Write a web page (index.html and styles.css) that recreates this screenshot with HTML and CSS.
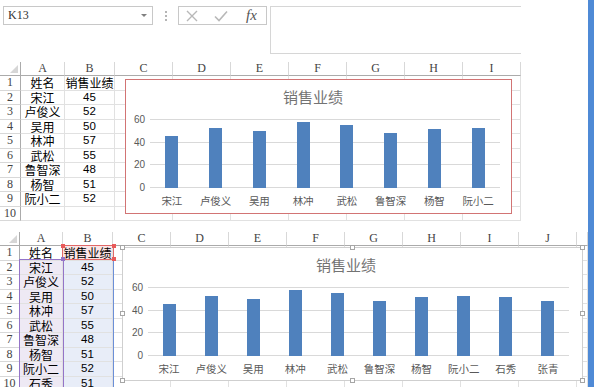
FILE: index.html
```html
<!DOCTYPE html>
<html lang="zh-CN">
<head>
    <meta charset="UTF-8">
    <title>销售业绩</title>
    <link rel="stylesheet" href="styles.css">
</head>
<body>
    <div class="window">
        <div class="main">
            <div class="formula-bar">
                <div class="name-box">
                    <span>K13</span>
                    <span class="drop"></span>
                </div>
                <div class="grip"><i></i><i></i><i></i></div>
                <div class="fx-box">
                    <svg width="12" height="12" viewBox="0 0 12 12"><path d="M1 1L11 11M11 1L1 11" stroke="#b8b8b8" stroke-width="1.4" fill="none"/></svg>
                    <svg width="14" height="12" viewBox="0 0 14 12"><path d="M1 6.5L5 10.5L13 1.5" stroke="#b8b8b8" stroke-width="1.6" fill="none"/></svg>
                    <span class="fx">fx</span>
                </div>
                <div class="formula-input"></div>
            </div>

            <div class="sheet sheet-top">
                <div class="grid" id="gridTop"></div>
                <div class="chart chart-top" id="chartTop">
                    <div class="chart-title">销售业绩</div>
                    <div class="chart-body">
                        <div class="axis"><span>60</span><span>40</span><span>20</span><span>0</span></div>
                        <div class="plot">
                            <div class="gridlines"><i></i><i></i><i></i><i></i></div>
                            <div class="bars"></div>
                        </div>
                        <div class="cats"></div>
                    </div>
                </div>
            </div>

            <div class="sheet sheet-bottom">
                <div class="grid" id="gridBottom"></div>
                <div class="range range-val"></div>
                <div class="range range-cat"></div>
                <div class="range range-name"></div>
                <div class="knob knob-red k-tl"></div>
                <div class="knob knob-red k-tr"></div>
                <div class="knob knob-red k-br"></div>
                <div class="knob knob-purple k-cat"></div>
                <div class="chart chart-bottom" id="chartBottom">
                    <div class="chart-title">销售业绩</div>
                    <div class="chart-body">
                        <div class="axis"><span>60</span><span>40</span><span>20</span><span>0</span></div>
                        <div class="plot">
                            <div class="gridlines"><i></i><i></i><i></i><i></i></div>
                            <div class="bars"></div>
                        </div>
                        <div class="cats"></div>
                    </div>
                    <div class="handle h-tl"></div>
                    <div class="handle h-tm"></div>
                    <div class="handle h-tr"></div>
                    <div class="handle h-ml"></div>
                    <div class="handle h-mr"></div>
                    <div class="handle h-bl"></div>
                    <div class="handle h-bm"></div>
                    <div class="handle h-br"></div>
                </div>
            </div>
        </div>
        <div class="edge"></div>
    </div>

    <script>
        // Sales data
        const people = [
            ['宋江', 45], ['卢俊义', 52], ['吴用', 50], ['林冲', 57], ['武松', 55],
            ['鲁智深', 48], ['杨智', 51], ['阮小二', 52], ['石秀', 51], ['张青', 48]
        ];

        function buildSheet(id, cols, rows, marked) {
            const grid = document.getElementById(id);
            const add = (cls, text) => {
                const cell = document.createElement('div');
                cell.className = 'cell ' + cls;
                cell.textContent = text === undefined ? '' : text;
                grid.appendChild(cell);
            };

            add('head corner');
            cols.forEach(letter => add('head col-head', letter));

            for (let r = 1; r <= 10; r++) {
                add('head row-head', r);
                const row = rows[r - 2];
                cols.forEach((letter, i) => {
                    let text = '';
                    let cls = 'txt';
                    if (i === 0) {
                        text = r === 1 ? '姓名' : (row ? row[0] : '');
                        if (marked && r > 1) cls += ' fill-cat';
                    }
                    if (i === 1) {
                        text = r === 1 ? '销售业绩' : (row ? row[1] : '');
                        if (r > 1) cls = 'num';
                        if (marked) cls += r === 1 ? ' fill-name' : ' fill-val';
                    }
                    add(cls, text);
                });
            }
        }

        function buildChart(id, items) {
            const chart = document.getElementById(id);
            const bars = chart.querySelector('.bars');
            const cats = chart.querySelector('.cats');
            items.forEach(([name, value]) => {
                const slot = document.createElement('div');
                slot.className = 'slot';
                const bar = document.createElement('div');
                bar.className = 'bar';
                bar.style.height = (value * 69 / 60) + 'px';
                slot.appendChild(bar);
                bars.appendChild(slot);

                const label = document.createElement('div');
                label.className = 'cat';
                label.textContent = name;
                cats.appendChild(label);
            });
        }

        buildSheet('gridTop', ['A', 'B', 'C', 'D', 'E', 'F', 'G', 'H', 'I'], people.slice(0, 8), false);
        buildSheet('gridBottom', ['A', 'B', 'C', 'D', 'E', 'F', 'G', 'H', 'I', 'J', ''], people, true);
        buildChart('chartTop', people.slice(0, 8));
        buildChart('chartBottom', people);
    </script>
</body>
</html>
```

FILE: styles.css
```css
* {
    margin: 0;
    padding: 0;
    box-sizing: border-box;
}

body {
    width: 600px;
    height: 387px;
    overflow: hidden;
    background: #fff;
    font-family: 'Liberation Sans', 'Noto Sans CJK SC', sans-serif;
    color: #000;
}

.window {
    display: flex;
    height: 387px;
}

.main {
    width: 588px;
    height: 387px;
    overflow: hidden;
}

.edge {
    width: 6px;
    background: #4f8ad6;
}

/* formula bar */
.formula-bar {
    display: flex;
    align-items: flex-start;
    height: 54px;
    padding: 6px 0 0 3px;
}

.name-box {
    width: 150px;
    height: 19px;
    border: 1px solid #c8c8c8;
    display: flex;
    align-items: center;
    justify-content: space-between;
    padding: 0 5px 0 4px;
    font-family: 'Liberation Serif', serif;
    font-size: 12px;
    color: #333;
}

.drop {
    border-left: 3px solid transparent;
    border-right: 3px solid transparent;
    border-top: 3px solid #808080;
}

.grip {
    width: 25px;
    height: 19px;
    display: flex;
    flex-direction: column;
    align-items: center;
    justify-content: center;
    gap: 2px;
}

.grip i {
    width: 2px;
    height: 2px;
    background: #b5b5b5;
}

.fx-box {
    width: 89px;
    height: 19px;
    border: 1px solid #c8c8c8;
    display: grid;
    grid-template-columns: 25px 33px 29px;
    align-items: center;
    justify-items: center;
}

.fx {
    font-family: 'Liberation Serif', serif;
    font-style: italic;
    font-size: 15px;
    line-height: 17px;
    color: #555;
}

.formula-input {
    margin-left: 3px;
    width: 251px;
    height: 48px;
    border: 1px solid #d6d6d6;
    border-right: none;
}

/* sheets */
.sheet {
    position: relative;
}

.sheet-top {
    margin-top: 8px;
}

.sheet-bottom {
    margin-top: 11px;
}

.grid {
    display: grid;
    grid-template-rows: 14px repeat(10, 14.5px);
}

.sheet-top .grid {
    width: 521px;
    grid-template-columns: 21px 44px 50px repeat(7, 58px);
}

.sheet-bottom .grid {
    grid-template-columns: 20px 43px 50px repeat(8, 58px) 11px;
}

.cell {
    border-right: 1px solid #e1e1e1;
    border-bottom: 1px solid #e1e1e1;
    font-size: 12px;
    line-height: 13.5px;
    text-align: center;
    white-space: nowrap;
}

.txt {
    font-family: 'Noto Sans CJK SC', sans-serif;
}

.num {
    font-size: 11.5px;
}

.head {
    font-family: 'Liberation Serif', serif;
    font-size: 12px;
    line-height: 13px;
    color: #444;
    border-color: #d8d8d8;
    overflow: hidden;
}

.col-head {
    border-bottom-color: #ababab;
}

.row-head {
    border-right-color: #ababab;
}

.corner {
    display: flex;
    align-items: flex-end;
    justify-content: flex-end;
    padding: 0 2px 2px 0;
    border-right-color: #ababab;
    border-bottom-color: #ababab;
}

.corner::after {
    content: '';
    border-left: 8px solid transparent;
    border-bottom: 8px solid #d6d6d6;
}

.fill-cat {
    background: #eee9f4;
}

.fill-val {
    background: #e8edf8;
}

.fill-name {
    background: #fbe5e5;
}

/* source range outlines */
.range {
    position: absolute;
}

.range-name {
    left: 62px;
    top: 13px;
    width: 52px;
    height: 15px;
    border: 1px solid #e06868;
}

.range-cat {
    left: 19px;
    top: 27px;
    width: 45px;
    height: 140px;
    border: 1px solid #9474c8;
}

.range-val {
    left: 63px;
    top: 27px;
    width: 51px;
    height: 140px;
    border: 1px solid #6b8fd8;
}

.knob {
    position: absolute;
    width: 4px;
    height: 4px;
}

.knob-red {
    background: #e85a5a;
}

.knob-purple {
    background: #9474c8;
}

.k-tl { left: 61px; top: 12px; }
.k-tr { left: 112px; top: 12px; }
.k-br { left: 112px; top: 25px; }
.k-cat { left: 61px; top: 25px; }

/* charts */
.chart {
    position: absolute;
    background: #fff;
    display: flex;
    flex-direction: column;
}

.chart-top {
    left: 125px;
    top: 17px;
    width: 387px;
    height: 135px;
    border: 1px solid #d27474;
    padding-right: 11px;
}

.chart-bottom {
    left: 122px;
    top: 15px;
    width: 461px;
    height: 134px;
    border: 1px solid #cfcfcf;
    padding-right: 13px;
}

.chart-title {
    margin-top: 7px;
    height: 20px;
    line-height: 20px;
    text-align: center;
    font-family: 'Noto Sans CJK SC', sans-serif;
    font-size: 15px;
    color: #737373;
}

.chart-body {
    margin-top: 12px;
    display: grid;
    grid-template-columns: 24px 1fr;
    grid-template-rows: 69px auto;
}

.chart-bottom .chart-body {
    grid-template-columns: 25px 1fr;
}

.axis {
    display: flex;
    flex-direction: column;
    justify-content: space-between;
    align-items: flex-end;
    padding-right: 5px;
    font-size: 10px;
    color: #595959;
}

.axis span {
    height: 1px;
    line-height: 1px;
}

.plot {
    display: grid;
}

.gridlines,
.bars {
    grid-area: 1 / 1;
}

.gridlines {
    display: flex;
    flex-direction: column;
    justify-content: space-between;
}

.gridlines i {
    height: 1px;
    background: #d9d9d9;
}

.bars {
    display: flex;
}

.slot {
    flex: 1;
    display: flex;
    align-items: flex-end;
    justify-content: center;
}

.bar {
    width: 13px;
    background: #4f81bd;
}

.cats {
    grid-column: 2;
    display: flex;
    margin-top: 6px;
}

.cat {
    flex: 1;
    text-align: center;
    font-family: 'Noto Sans CJK SC', sans-serif;
    font-size: 10.5px;
    line-height: 14px;
    color: #595959;
    white-space: nowrap;
}

/* selection handles on the chart */
.handle {
    position: absolute;
    width: 5px;
    height: 5px;
    background: #fff;
    border: 1px solid #a6a6a6;
}

.h-tl { left: -3px; top: -3px; }
.h-tm { left: calc(50% - 3px); top: -3px; }
.h-tr { right: -3px; top: -3px; }
.h-ml { left: -3px; top: calc(50% - 3px); }
.h-mr { right: -3px; top: calc(50% - 3px); }
.h-bl { left: -3px; bottom: -3px; }
.h-bm { left: calc(50% - 3px); bottom: -3px; }
.h-br { right: -3px; bottom: -3px; }
```
